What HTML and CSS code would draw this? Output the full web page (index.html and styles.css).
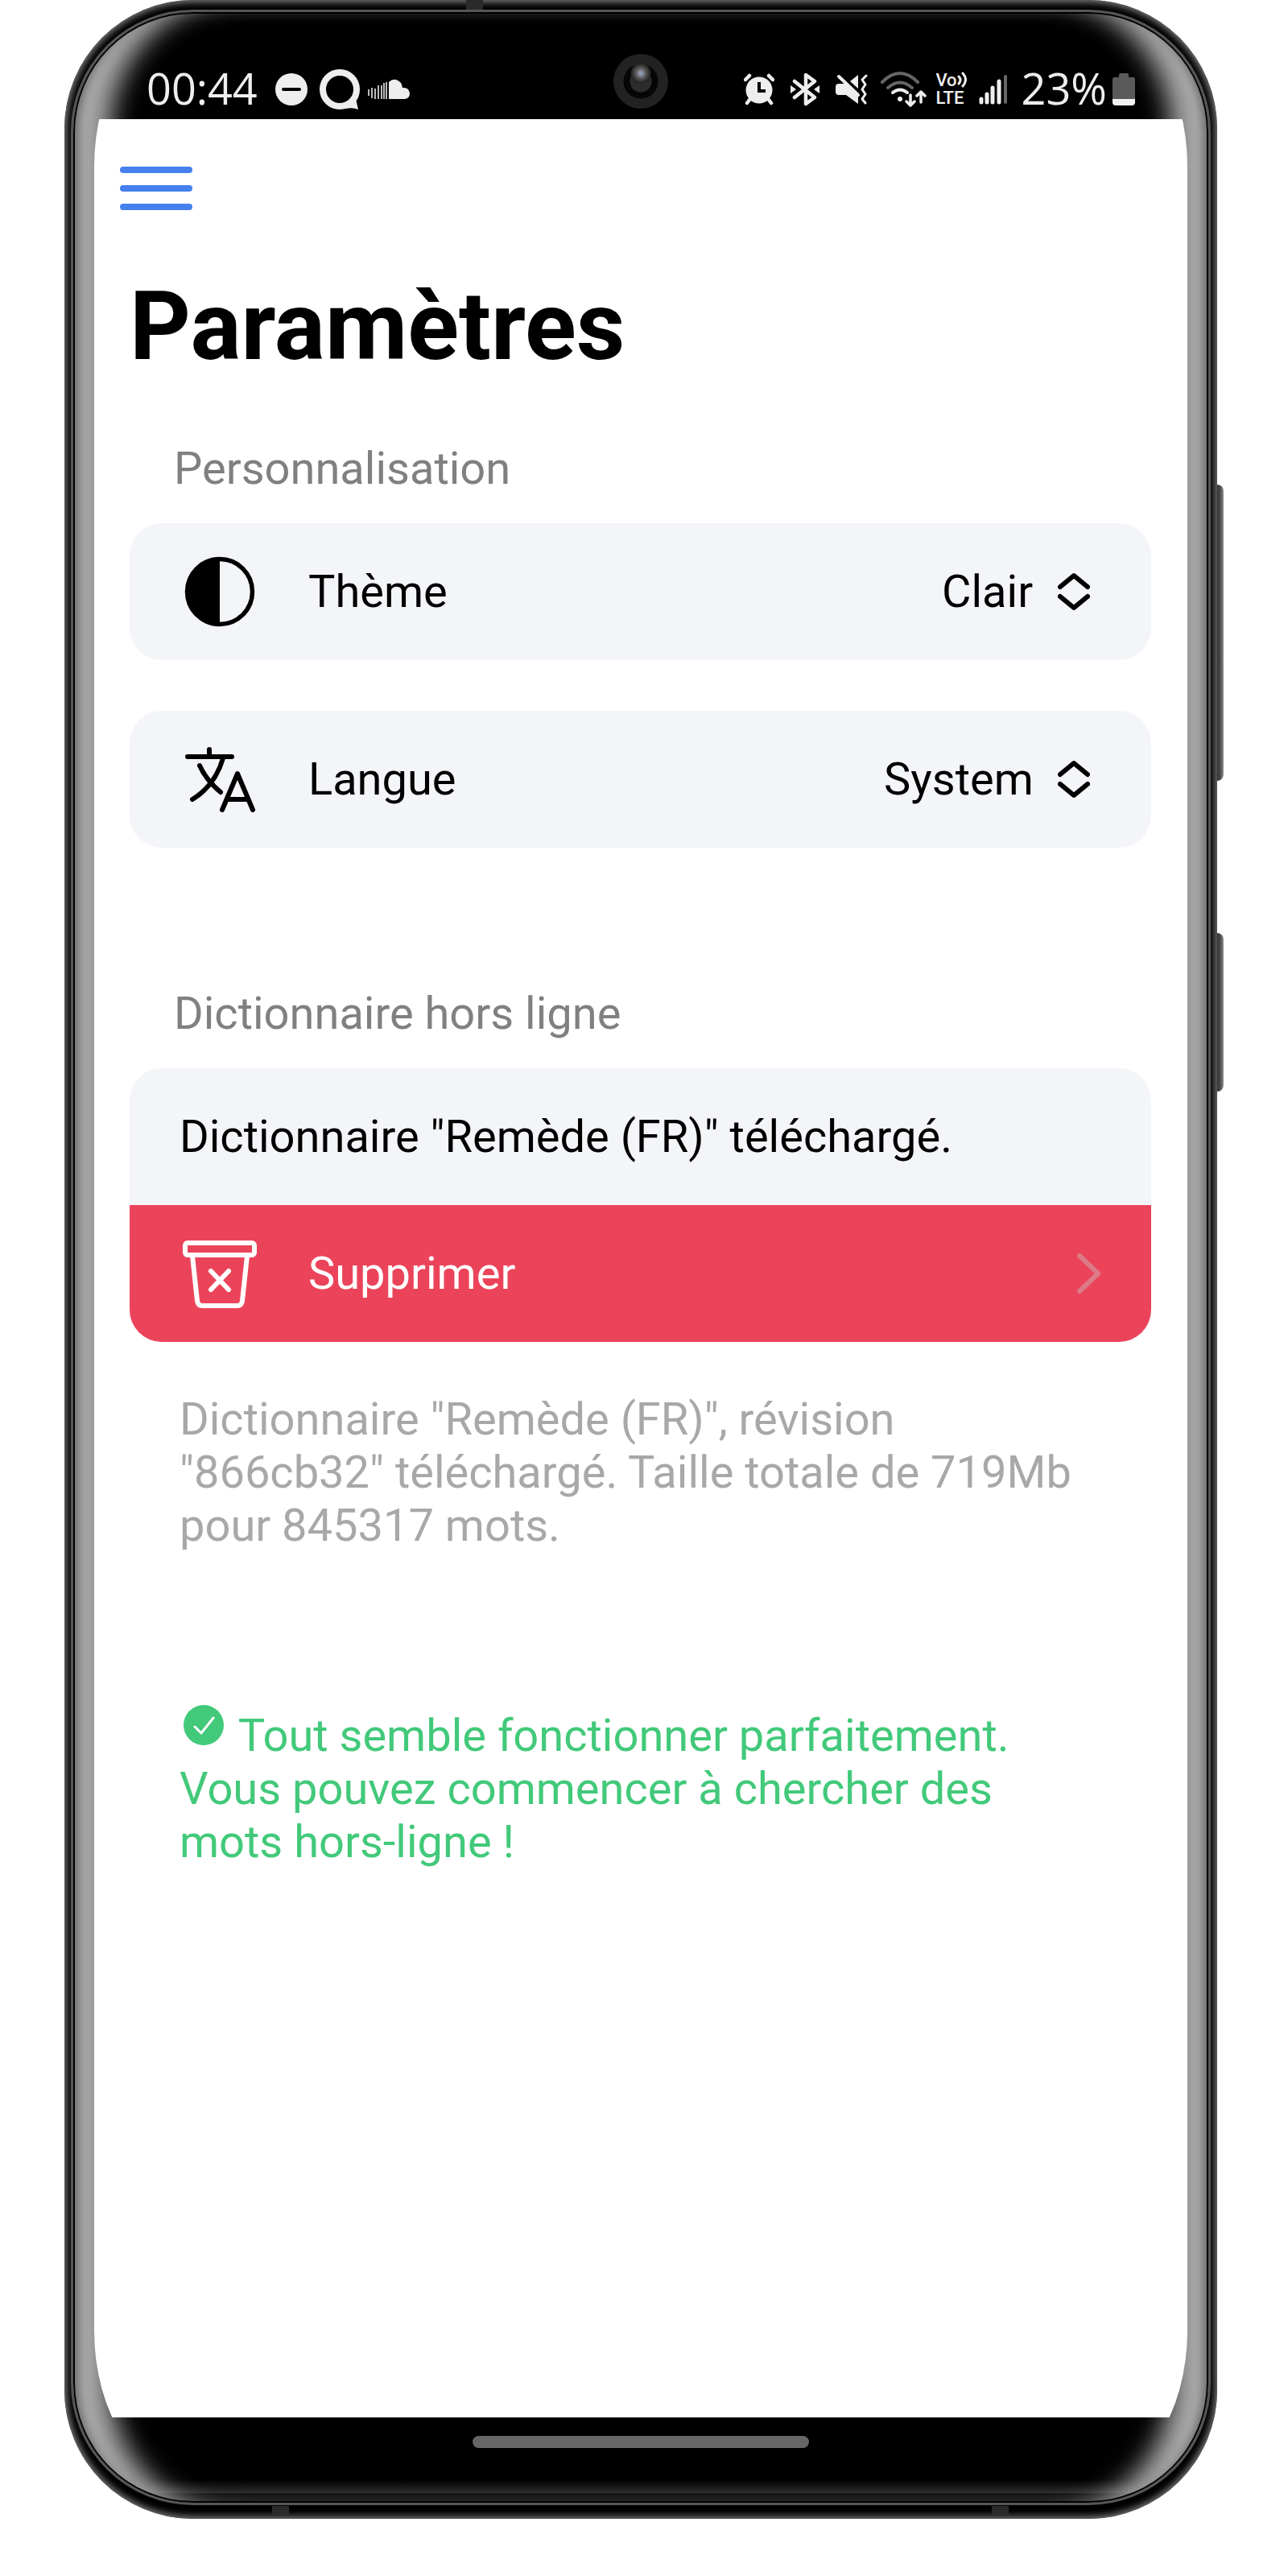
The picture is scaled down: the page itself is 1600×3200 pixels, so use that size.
FILE: index.html
```html
<!DOCTYPE html>
<html lang="fr">
<head>
<meta charset="utf-8">
<meta name="viewport" content="width=device-width, initial-scale=1">
<title>Paramètres</title>
<link rel="stylesheet" href="styles.css">
</head>
<body>
<div class="phone">
  <span class="side-key side-key-volume"></span>
  <span class="side-key side-key-power"></span>
  <span class="antenna antenna-top"></span>
  <span class="antenna antenna-left"></span>
  <span class="antenna antenna-right"></span>
  <div class="bezel">
    <span class="camera"></span>
    <div class="glass">
      <header class="status-bar">
        <span class="clock">00:44</span>
        <svg class="icon-dnd" width="40" height="40" viewBox="0 0 40 40"><circle cx="20" cy="20" r="20" fill="#eee"/><path d="M10 20h20" stroke="#000" stroke-width="4" stroke-linecap="round"/></svg>
        <svg class="icon-chat" width="52" height="52" viewBox="0 0 52 52"><circle cx="26" cy="26" r="21" fill="none" stroke="#eee" stroke-width="8"/><path d="M33 47q8-2 13-9l3 13q-7-3-16-1z" fill="#eee"/></svg>
        <svg class="icon-cloud" width="52" height="26" viewBox="0 0 52 26"><path d="M26 25V4q4-4 9-3 7 2 8 10 8-1 9 7 0 6-6 7z" fill="#eee"/><path d="M1 13v8M5 11v13M9 12v13M13 8v17M17 8v17M20 5v20M23 4v21" stroke="#bbb" stroke-width="2"/></svg>
        <span class="spacer"></span>
        <svg width="38" height="40" viewBox="0 0 38 40"><circle cx="19" cy="21" r="16.500" fill="#eee"/><path d="M2 8l5-5M36 8l-5-5M7 33l-3 4M31 33l3 4" stroke="#eee" stroke-width="4.500" stroke-linecap="round"/><path d="M19 11v11h8" fill="none" stroke="#000" stroke-width="4"/></svg>
        <svg class="icon-bluetooth" width="36" height="42" viewBox="0 0 36 42"><path d="M5 11l25 20-11 8V3l11 8L5 31" fill="none" stroke="#eee" stroke-width="4.500" stroke-linejoin="round" stroke-linecap="round"/><path d="M0 16l7 5-7 5zM36 16l-7 5 7 5z" fill="#eee"/></svg>
        <svg class="icon-mute" width="40" height="40" viewBox="0 0 40 40"><path d="M4 13h9l15 13v12L13 27H4q-4 0-4-4v-6q0-4 4-4zM28 2v17L18 10z" fill="#eee"/><path d="M4 4l24 23" stroke="#eee" stroke-width="4" stroke-linecap="round"/><path d="M38 3l-5 5 4 6-4 6 4 6-4 6 4 5" fill="none" stroke="#eee" stroke-width="3" stroke-linecap="round" stroke-linejoin="round"/></svg>
        <svg class="icon-wifi" width="58" height="44" viewBox="0 0 58 44" fill="none" stroke-width="4" stroke-linecap="round"><path d="M2 13q22-22 44 0M9 20q15-13 30 0" stroke="#666"/><path d="M15 26q9-7 18 0" stroke="#eee"/><circle cx="24" cy="34" r="3" fill="#eee"/><path d="M37 29v12M32 37l5 5 5-5M50 38V26M45 30l5-5 5 5" stroke="#eee" stroke-width="3.500" stroke-linejoin="round"/></svg>
        <span class="volte"><span>Vo<svg width="12" height="20" viewBox="0 0 12 20" fill="none" stroke="#eee" stroke-width="3" stroke-linecap="round"><path d="M2 6q4 4 0 9M7 2q7 8 0 16"/></svg></span><span>LTE</span></span>
        <svg class="icon-signal" width="36" height="38" viewBox="0 0 36 38" stroke-width="5" stroke-linecap="round"><path d="M3 31v4M10 25v10M17 17v18M25 9v26" stroke="#eee"/><path d="M33 3v32" stroke="#666" stroke-width="4"/></svg>
        <span class="charge">23%</span>
        <svg class="icon-battery" width="28" height="40" viewBox="0 0 28 40"><path d="M10 0h9q1 0 1 2v2q0 1 2 1h4q2 0 2 3v25H0V8q0-3 2-3h5q1 0 1-1V2q0-2 2-2z" fill="#5a5a5a"/><path d="M0 32h28v4q0 4-4 4H4q-4 0-4-4z" fill="#f2f2f2"/></svg>
      </header>

      <main class="screen">
        <button class="menu" type="button" aria-label="Menu">
          <svg width="90" height="54" viewBox="0 0 90 54"><path d="M4 4h82M4 27h82M4 50h82" stroke="#4580ee" stroke-width="8" stroke-linecap="round"/></svg>
        </button>
        <h1>Paramètres</h1>

        <section>
          <h2>Personnalisation</h2>
          <div class="row card">
            <svg class="row-icon" width="92" height="92" viewBox="0 0 92 92"><circle cx="46" cy="46" r="40.500" fill="none" stroke="#000" stroke-width="5.500"/><path d="M46 4v84a42 42 0 0 1 0-84z"/></svg>
            <label for="theme">Thème</label>
            <select id="theme"><option>Clair</option></select>
            <svg class="row-arrows" width="40" height="48" viewBox="0 0 40 48" fill="none" stroke="#000" stroke-width="6" stroke-linecap="round" stroke-linejoin="round"><path d="M3 18L20 4l17 14M3 30l17 14 17-14"/></svg>
          </div>
          <div class="row card">
            <svg class="row-icon" width="92" height="92" viewBox="0 0 92 92" fill="none" stroke="#000" stroke-width="6" stroke-linecap="round" stroke-linejoin="round"><path d="M6 18h55M33 9v8M50 20Q40 54 12 71M21 29q8 18 26 33M49 84l19-45 19 45M55 71h26"/></svg>
            <label for="langue">Langue</label>
            <select id="langue"><option>System</option></select>
            <svg class="row-arrows" width="40" height="48" viewBox="0 0 40 48" fill="none" stroke="#000" stroke-width="6" stroke-linecap="round" stroke-linejoin="round"><path d="M3 18L20 4l17 14M3 30l17 14 17-14"/></svg>
          </div>
        </section>

        <section class="offline">
          <h2>Dictionnaire hors ligne</h2>
          <div class="card group">
            <p class="row">Dictionnaire "Remède (FR)" téléchargé.</p>
            <button class="row delete" type="button">
              <svg class="row-icon" width="92" height="92" viewBox="0 0 92 92" fill="none" stroke="#fff" stroke-width="6" stroke-linecap="round" stroke-linejoin="round"><rect x="3" y="8" width="86" height="15" rx="3"/><path d="M12 24l6 56q1 6 6 6h44q5 0 6-6l6-56M35 43l22 23M57 43L35 66"/></svg>
              <span>Supprimer</span>
              <svg class="delete-arrow" width="30" height="52" viewBox="0 0 30 52" fill="none" stroke="#dc7a88" stroke-width="6" stroke-linecap="round" stroke-linejoin="round"><path d="M3 4l23 22L3 48"/></svg>
            </button>
          </div>
          <p class="details">Dictionnaire "Remède (FR)", révision "866cb32" téléchargé. Taille totale de 719Mb pour 845317 mots.</p>
        </section>

        <p class="health"><svg width="60" height="60" viewBox="0 0 60 60"><circle cx="30" cy="30" r="25" fill="#42c97a"/><path d="M19 32l8 8 15-19" fill="none" stroke="#fff" stroke-width="3" stroke-linecap="round" stroke-linejoin="round"/></svg> Tout semble fonctionner parfaitement. Vous pouvez commencer à chercher des mots hors-ligne !</p>
      </main>

      <footer class="nav-bar"><span class="gesture"></span></footer>
    </div>
  </div>
</div>
</body>
</html>
```
FILE: styles.css
```css
* {
  box-sizing: border-box;
}

body {
  margin: 0;
  min-height: 100vh;
  padding: 0 88px 71px 80px;
  display: grid;
  background: #fff;
  color: #000;
  font: 56px/66px Roboto, "Noto Sans", sans-serif;
}

h1, h2, p {
  margin: 0;
}

svg {
  flex: none;
}

/* Handset */
.phone {
  position: relative;
  display: grid;
  padding: 12px 8px 17px;
  border-radius: 160px;
  background: #000;
  box-shadow: inset 0 0 8px 3px #7c7c7c;
}

.bezel {
  position: relative;
  display: grid;
  padding: 2px 26px 24px;
  border: 3px solid #565656;
  border-radius: 152px;
  background: linear-gradient(to top, #111 12px, #2a2d2c 12px, #000 29px);
  box-shadow:
    inset 0 0 0 2px #000,
    inset 20px 0 12px -14px #666,
    inset -20px 0 12px -14px #666,
    inset 66px 0 32px -20px #aaa,
    inset -66px 0 32px -20px #aaa;
}

.glass {
  display: flex;
  flex-direction: column;
  overflow: hidden;
  border-radius: 126px / 190px;
}

.side-key {
  position: absolute;
  left: 100%;
  width: 8px;
  border-radius: 0 8px 8px 0;
  background: linear-gradient(to right, #333, #555 60%, #999);
}

.side-key-volume {
  top: 602px;
  height: 368px;
}

.side-key-power {
  top: 1159px;
  height: 197px;
}

.antenna {
  position: absolute;
  width: 21px;
  height: 12px;
  background: #2a2a2a;
}

.antenna-top {
  top: 0;
  left: 499px;
}

.antenna-left {
  bottom: 4px;
  left: 258px;
}

.antenna-right {
  bottom: 4px;
  right: 259px;
}

.camera {
  position: absolute;
  top: 52px;
  left: calc(50% - 34px);
  width: 68px;
  height: 68px;
  border-radius: 50%;
  background:
    radial-gradient(circle 5px at 50% 24px, #8c9cc0, transparent),
    radial-gradient(circle at 50% 24px, #999, #222 12px, transparent 13px),
    radial-gradient(circle 14px at 50% 50%, #2c2c2c 13px, transparent 14px),
    radial-gradient(circle 22px at 50% 50%, #060606 21px, #222 22px);
}

/* Status bar */
.status-bar {
  display: flex;
  align-items: center;
  height: 131px;
  padding: 57px 65px 0 65px;
  color: #eee;
  font: 54px/60px "Open Sans", "Noto Sans", sans-serif;
}

.clock,
.charge {
  margin-top: -4px;
}

.spacer {
  flex: 1;
}

.icon-dnd {
  margin-left: 22px;
}

.icon-chat {
  margin-left: 14px;
}

.icon-cloud {
  margin-left: 9px;
}

.icon-bluetooth,
.icon-mute {
  margin-left: 20px;
}

.icon-wifi {
  margin-left: 16px;
}

.volte {
  display: flex;
  flex-direction: column;
  margin-left: 10px;
  font: 500 22px/22px Roboto, sans-serif;
}

.volte span {
  display: flex;
}

.icon-signal {
  margin-left: 15px;
}

.charge {
  margin-left: 17px;
}

.icon-battery {
  margin-left: 7px;
}

/* Settings screen */
.screen {
  flex: 1;
  padding: 59px 45px 60px 44px;
  background: #fff;
}

button, select {
  border: 0;
  padding: 0;
  background: none;
  color: inherit;
  font: inherit;
}

.menu {
  display: block;
  margin-left: -12px;
  height: 54px;
}

.menu svg {
  display: block;
}

h1 {
  margin: 75px 0 73px;
  font-size: 118px;
  line-height: 140px;
  font-weight: 700;
}

h2 {
  margin: 0 0 35px 55px;
  color: #808080;
  font-size: inherit;
  font-weight: 400;
}

.card {
  border-radius: 40px;
  background: #f4f5f8;
}

.card + .card {
  margin-top: 63px;
}

.row {
  display: flex;
  align-items: center;
  width: 100%;
  min-height: 170px;
  padding: 0 62px;
}

.row-icon {
  margin: 0 64px 0 4px;
}

label {
  flex: 1;
}

select {
  appearance: none;
}

.row-arrows {
  margin: 0 14px 0 30px;
}

.offline {
  margin-top: 173px;
}

.group {
  overflow: hidden;
}

.delete {
  background: #eb445a;
  color: #fff;
}

.delete-arrow {
  margin-left: auto;
}

.details {
  margin: 63px 80px 0 62px;
  color: #a8a8a8;
}

.health {
  margin: 195px 80px 0 62px;
  color: #42c97a;
}

.health svg {
  margin: -30px 0;
  vertical-align: 32px;
}

.nav-bar {
  display: flex;
  justify-content: center;
  height: 82px;
  padding-top: 23px;
}

.gesture {
  width: 418px;
  height: 15px;
  border-radius: 8px;
  background: #666;
}
```
